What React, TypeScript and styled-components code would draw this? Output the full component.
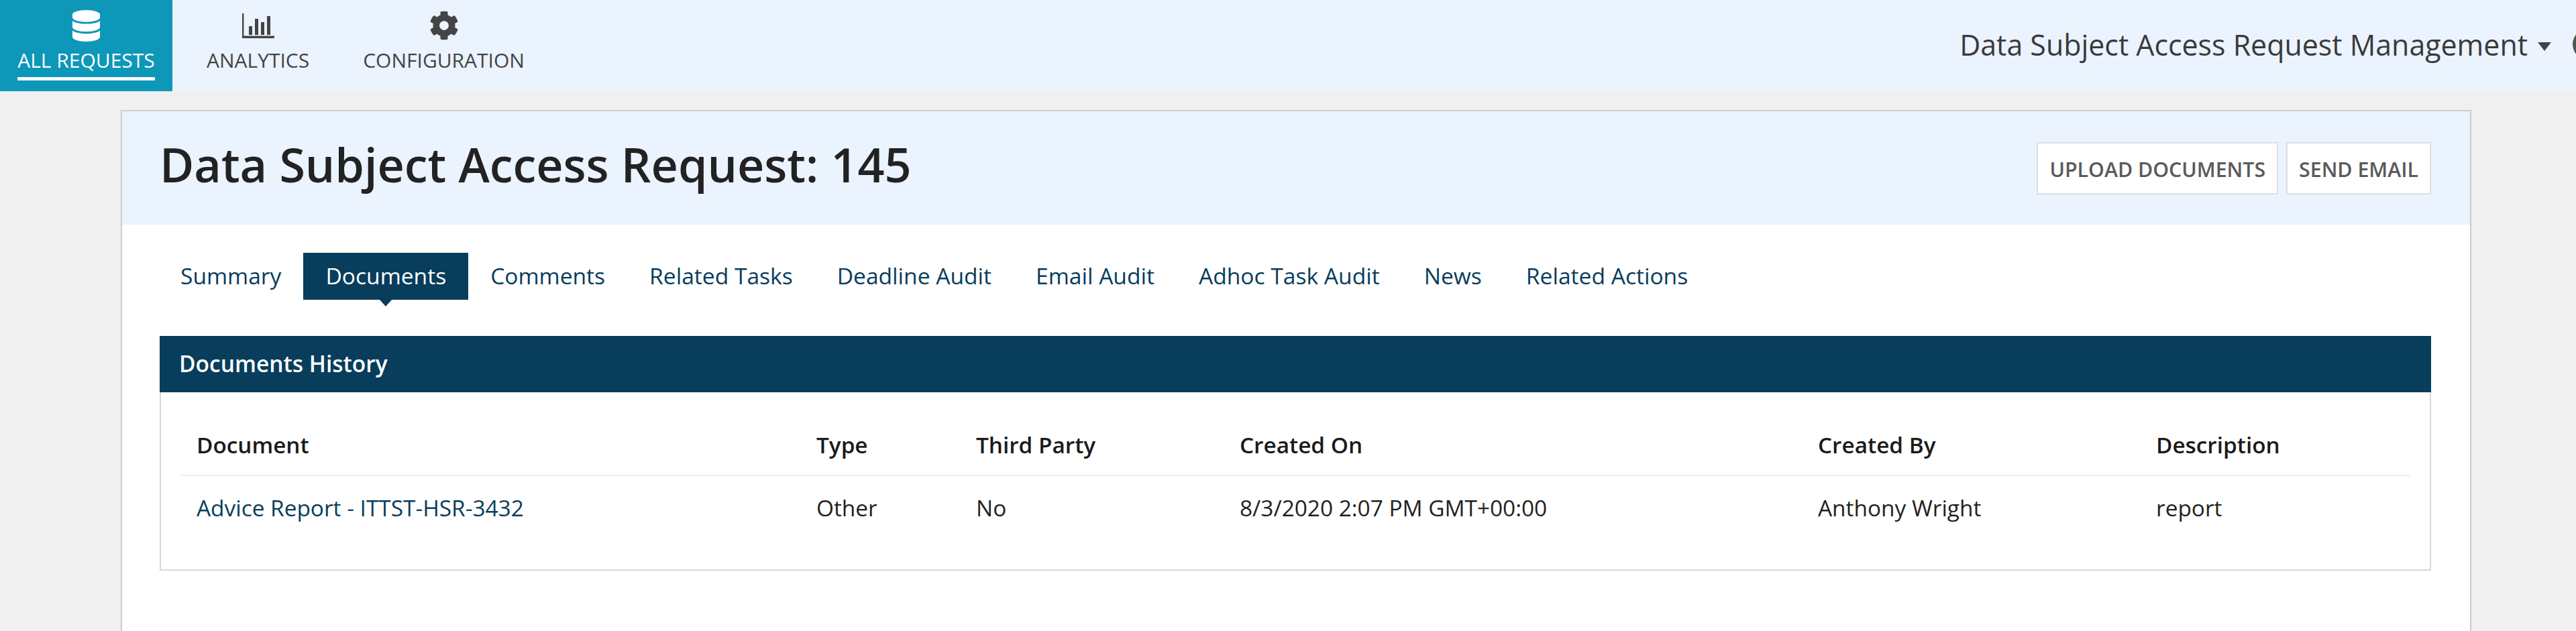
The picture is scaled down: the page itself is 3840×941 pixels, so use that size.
import React from "react";
import styled, { createGlobalStyle } from "styled-components";
import { FaDatabase, FaCog } from "react-icons/fa";

const Global = createGlobalStyle`
  html, body { margin: 0; padding: 0; height: 100%; background: #f0f0f0; overflow: hidden; }
  body { font-family: "Open Sans", "Noto Sans", sans-serif; }
  * { box-sizing: border-box; }
`;

const Page = styled.div`
  display: flex;
  flex-direction: column;
  height: 941px;
`;

const TopBar = styled.header`
  display: flex;
  justify-content: space-between;
  align-items: stretch;
  height: 136px;
  flex: none;
  background: #ebf3fe;
`;

const NavList = styled.nav`
  display: flex;
`;

const NavItem = styled.a<{ $active?: boolean }>`
  display: flex;
  flex-direction: column;
  align-items: center;
  width: ${(p) => (p.$active ? "257px" : "auto")};
  padding: ${(p) => (p.$active ? "0" : "0 40px")};
  margin-right: ${(p) => (p.$active ? "11px" : "0")};
  background: ${(p) => (p.$active ? "#0d97b9" : "transparent")};
  color: ${(p) => (p.$active ? "#ffffff" : "#444444")};
`;

const IconSlot = styled.span`
  display: flex;
  align-items: center;
  justify-content: center;
  height: 48px;
  margin-top: 14px;
  font-size: 47px;
`;

const GearSlot = styled(IconSlot)`
  font-size: 44px;
`;

const NavLabel = styled.span<{ $active?: boolean }>`
  display: block;
  margin-top: 8px;
  padding-bottom: 5px;
  font-size: 30px;
  line-height: 40px;
  white-space: nowrap;
  border-bottom: 5px solid ${(p) => (p.$active ? "#ffffff" : "transparent")};
`;

const AppSwitch = styled.div`
  display: flex;
  align-items: center;
  padding-bottom: 4px;
  color: #3a3a3a;
  font-size: 42.9px;
  font-weight: 500;
  white-space: nowrap;
  margin-right: -39px;
`;

const Caret = styled.span`
  width: 0;
  height: 0;
  margin-left: 15px;
  margin-top: 6px;
  border-left: 10px solid transparent;
  border-right: 10px solid transparent;
  border-top: 13px solid #444444;
`;

const Avatar = styled.span`
  width: 44px;
  height: 46px;
  margin-left: 32px;
  border-radius: 50%;
  border: 5px solid #55554c;
`;

const Card = styled.main`
  flex: 1;
  width: 3504px;
  margin: 28px 0 0 180px;
  background: #ffffff;
  border: 2px solid #c9cdd2;
  border-bottom: none;
`;

const CardHeader = styled.div`
  display: flex;
  justify-content: space-between;
  align-items: flex-start;
  height: 169px;
  padding: 0 58px 0 56px;
  background: #ebf3fe;
`;

const Title = styled.h1`
  margin: 34px 0 0;
  color: #222222;
  font-size: 70px;
  line-height: 90px;
  font-weight: 600;
  white-space: nowrap;
`;

const Actions = styled.div`
  display: flex;
  gap: 12px;
  margin-top: 46px;
`;

const ActionButton = styled.button`
  height: 78px;
  padding: 2px 17px 0;
  background: #ffffff;
  border: 2px solid #dcdfe3;
  color: #5a5a5a;
  font-family: inherit;
  font-size: 30.3px;
  font-weight: 600;
  white-space: nowrap;
`;

const Tabs = styled.div`
  display: flex;
  margin: 42px 0 0 54px;
`;

const Tab = styled.a<{ $active?: boolean }>`
  position: relative;
  display: flex;
  align-items: center;
  height: 70px;
  padding: 0 33px 3px;
  background: ${(p) => (p.$active ? "#083d5c" : "transparent")};
  color: ${(p) => (p.$active ? "#ffffff" : "#083d5c")};
  font-size: 33.6px;
  white-space: nowrap;
  ${(p) =>
    p.$active
      ? `&::after {
    content: "";
    position: absolute;
    left: 50%;
    top: 100%;
    margin-left: -9px;
    border-left: 9px solid transparent;
    border-right: 9px solid transparent;
    border-top: 10px solid #083d5c;
  }`
      : ""}
`;

const Panel = styled.section`
  width: 3386px;
  height: 350px;
  margin: 54px 0 0 56px;
  border: 2px solid #d5d8dc;
  border-top: none;
`;

const PanelHeader = styled.div`
  display: flex;
  align-items: center;
  height: 84px;
  margin: 0 -2px;
  padding: 0 29px 3px;
  background: #083d5c;
  color: #ffffff;
  font-size: 33.5px;
  font-weight: 600;
`;

const Table = styled.div`
  margin: 0 29px;
`;

const Row = styled.div<{ $head?: boolean }>`
  display: grid;
  grid-template-columns: 924px 238px 393px 862px 504px 1fr;
  height: ${(p) => (p.$head ? "125px" : "94px")};
  align-items: ${(p) => (p.$head ? "end" : "center")};
  ${(p) => (p.$head ? "border-bottom: 2px solid #ebedef;" : "")}
`;

const HeadCell = styled.div`
  padding: 0 24px 21px;
  color: #1b1b1b;
  font-size: 33.3px;
  line-height: 47px;
  font-weight: 600;
  white-space: nowrap;
`;

const Cell = styled.div`
  padding: 0 24px;
  color: #222222;
  font-size: 33.4px;
  white-space: nowrap;
`;

const DocLink = styled.a`
  color: #083d5c;
`;

const ChartIcon = () => (
  <svg width="48" height="37" viewBox="0 0 48 37" fill="#444444" aria-hidden="true">
    <path d="M0 0h2.4v33.5H48V37H0z" />
    <rect x="10" y="19" width="5" height="13" />
    <rect x="19" y="8" width="5" height="24" />
    <rect x="28" y="13" width="5" height="19" />
    <rect x="37" y="4" width="5" height="28" />
  </svg>
);

const columns = ["Document", "Type", "Third Party", "Created On", "Created By", "Description"];
const tabs = ["Summary", "Documents", "Comments", "Related Tasks", "Deadline Audit", "Email Audit", "Adhoc Task Audit", "News", "Related Actions"];

export default function App() {
  return (
    <Page>
      <Global />
      <TopBar>
        <NavList>
          <NavItem $active>
            <IconSlot><FaDatabase /></IconSlot>
            <NavLabel $active>ALL REQUESTS</NavLabel>
          </NavItem>
          <NavItem>
            <IconSlot><ChartIcon /></IconSlot>
            <NavLabel>ANALYTICS</NavLabel>
          </NavItem>
          <NavItem>
            <GearSlot><FaCog /></GearSlot>
            <NavLabel>CONFIGURATION</NavLabel>
          </NavItem>
        </NavList>
        <AppSwitch>
          Data Subject Access Request Management
          <Caret />
          <Avatar />
        </AppSwitch>
      </TopBar>
      <Card>
        <CardHeader>
          <Title>Data Subject Access Request: 145</Title>
          <Actions>
            <ActionButton>UPLOAD DOCUMENTS</ActionButton>
            <ActionButton>SEND EMAIL</ActionButton>
          </Actions>
        </CardHeader>
        <Tabs>
          {tabs.map((t) => (
            <Tab key={t} $active={t === "Documents"}>{t}</Tab>
          ))}
        </Tabs>
        <Panel>
          <PanelHeader>Documents History</PanelHeader>
          <Table>
            <Row $head>
              {columns.map((c) => (
                <HeadCell key={c}>{c}</HeadCell>
              ))}
            </Row>
            <Row>
              <Cell><DocLink>Advice Report - ITTST-HSR-3432</DocLink></Cell>
              <Cell>Other</Cell>
              <Cell>No</Cell>
              <Cell>8/3/2020 2:07 PM GMT+00:00</Cell>
              <Cell>Anthony Wright</Cell>
              <Cell>report</Cell>
            </Row>
          </Table>
        </Panel>
      </Card>
    </Page>
  );
}
